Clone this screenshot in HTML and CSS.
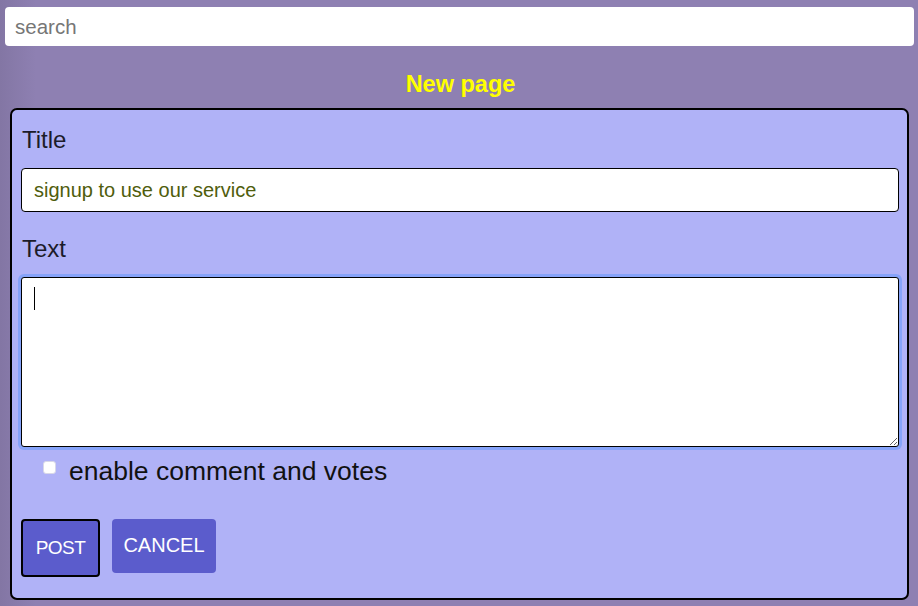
FILE: index.html
```html
<!DOCTYPE html>
<html>
<head>
<meta charset="utf-8">
<link rel="stylesheet" href="styles.css">
</head>
<body>
<div class="page">
  <input class="search" type="text" placeholder="search">
  <h1 class="heading">New page</h1>
  <form class="panel">
    <label class="label">Title</label>
    <input class="title-input" type="text" value="signup to use our service">
    <label class="label label-text">Text</label>
    <div class="area-wrap">
      <textarea class="area"></textarea>
      <span class="caret"></span>
    </div>
    <div class="check-row">
      <input class="check" type="checkbox">
      <span class="check-label">enable comment and votes</span>
    </div>
    <div class="buttons">
      <button type="button" class="btn btn-post">POST</button>
      <button type="button" class="btn btn-cancel">CANCEL</button>
    </div>
  </form>
</div>
</body>
</html>
```

FILE: styles.css
```css
html, body {
  margin: 0;
  height: 100%;
}
body {
  background: linear-gradient(to right, #8376a4 0px, #8e80b2 36px, #8e80b2 100%);
  font-family: "Liberation Sans", Arial, sans-serif;
  overflow: hidden;
}
.page {
  padding: 7px 4px 0 5px;
  display: flex;
  flex-direction: column;
}
.search {
  box-sizing: border-box;
  width: 909px;
  height: 39px;
  border: none;
  border-radius: 4px;
  background: #fff;
  padding: 0 10px;
  font-family: "Liberation Sans", Arial, sans-serif;
  font-size: 20.5px;
  outline: none;
  margin: 0;
}
.search::placeholder {
  color: #767676;
}
.heading {
  margin: 0;
  height: 62px;
  line-height: 77px;
  text-align: center;
  color: #ffff00;
  font-size: 23.5px;
  font-weight: bold;
  width: 909px;
  padding-left: 2px;
  box-sizing: border-box;
}
.panel {
  box-sizing: border-box;
  margin: 0 0 0 5px;
  width: 899px;
  height: 492px;
  border: 2px solid #000;
  border-radius: 7px;
  background: #b0b2f7;
  padding: 16px 9px 0 9px;
  display: flex;
  flex-direction: column;
}
.label {
  font-size: 24px;
  line-height: 28px;
  color: #1c1c2a;
  padding-left: 1px;
}
.title-input {
  box-sizing: border-box;
  margin: 14px 0 0 0;
  width: 878px;
  height: 44px;
  border: 1px solid #000;
  border-radius: 4px;
  background: #fff;
  padding: 0 12px;
  font-family: "Liberation Sans", Arial, sans-serif;
  font-size: 20px;
  color: #4f5d0c;
  outline: none;
}
.label-text {
  margin-top: 23px;
}
.area-wrap {
  position: relative;
  margin-top: 14px;
  width: 878px;
  height: 170px;
}
.area {
  box-sizing: border-box;
  display: block;
  width: 878px;
  height: 170px;
  margin: 0;
  border: 1px solid #000;
  border-radius: 3px;
  background: #fff;
  box-shadow: 0 0 0 3px #86a3f9;
  outline: none;
  resize: both;
}
.caret {
  position: absolute;
  left: 13px;
  top: 10px;
  width: 1px;
  height: 23px;
  background: #000;
}
.check-row {
  display: flex;
  align-items: center;
  margin-top: 10px;
  height: 29px;
}
.check {
  width: 13px;
  height: 13px;
  margin: 0 0 0 22px;
  position: relative;
  top: -4px;
  appearance: none;
  background: #fff;
  border-radius: 3px;
  border: 1px solid #d8d8e8;
  box-sizing: border-box;
}
.check-label {
  margin-left: 13px;
  font-size: 26.5px;
  color: #111;
}
.buttons {
  display: flex;
  align-items: flex-start;
  gap: 12px;
  margin-top: 33px;
}
.btn {
  font-family: "Liberation Sans", Arial, sans-serif;
  font-size: 19px;
  color: #fff;
  background: #5b5ccc;
  border-radius: 4px;
  height: 54px;
  padding: 0 12px;
  margin: 0;
  cursor: pointer;
}
.btn-post {
  border: 2px solid #000;
  height: 58px;
  width: 79px;
  padding: 0;
  letter-spacing: -0.5px;
}
.btn-cancel {
  border: none;
  width: 104px;
  padding: 0 0 2px 0;
  font-size: 20px;
}
```
